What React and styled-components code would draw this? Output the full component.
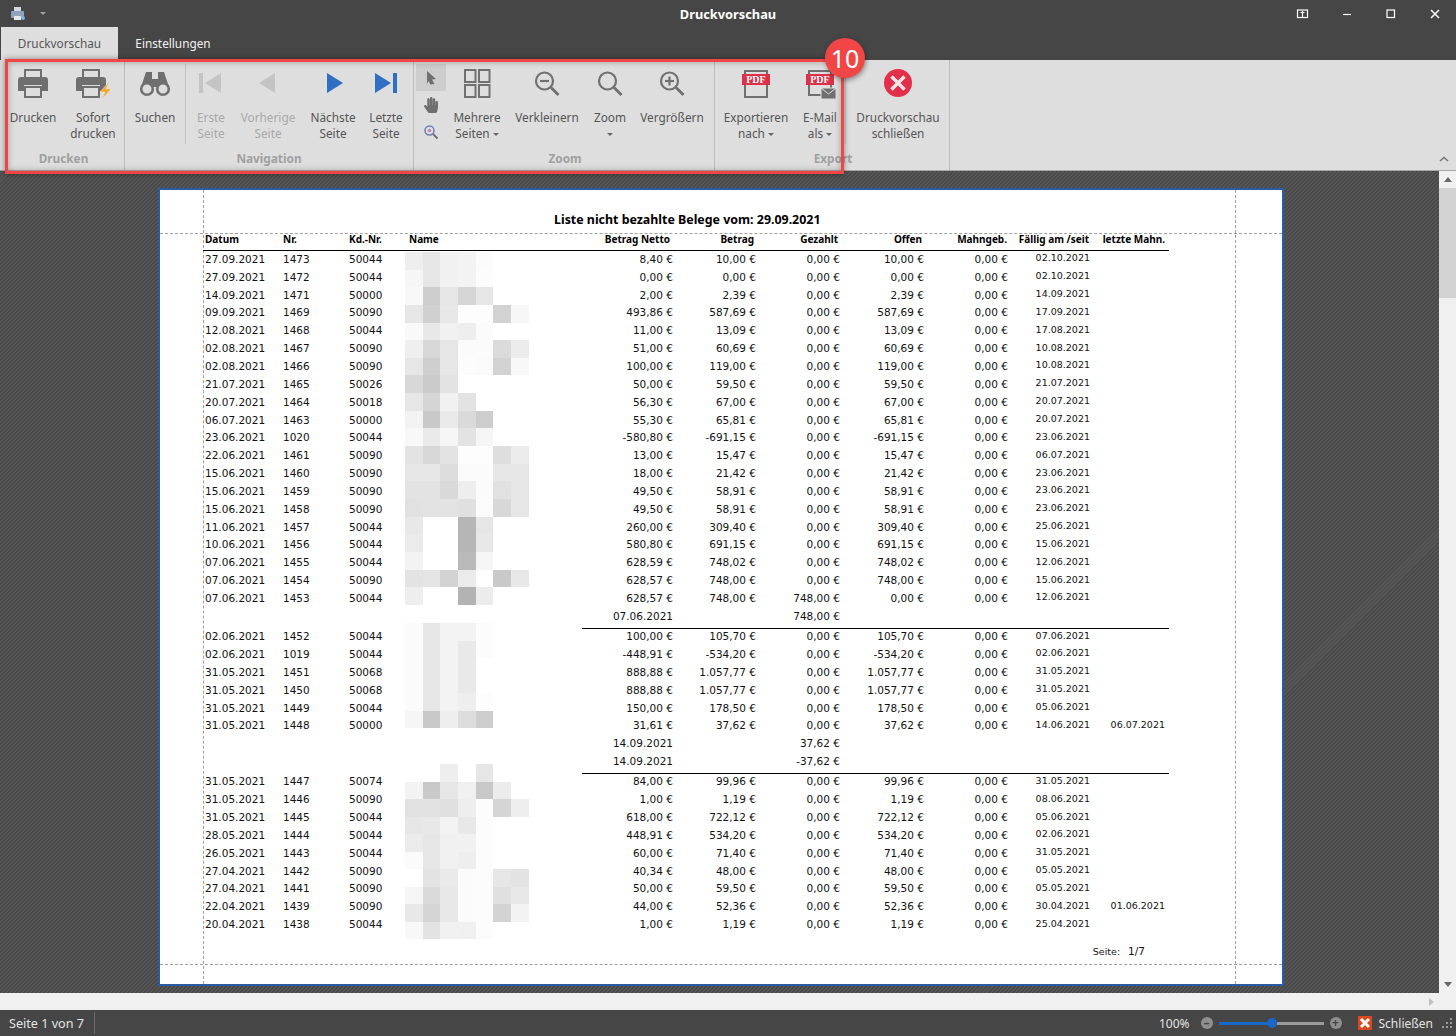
import React from "react";
import styled, { createGlobalStyle } from "styled-components";
import { FaHandPaper } from "react-icons/fa";

const GlobalStyle = createGlobalStyle`
  html, body { margin: 0; padding: 0; height: 100%; }
  body { background: #464646; font-family: "Noto Sans", "Liberation Sans", sans-serif; }
`;

// date, nr, kd, netto, betrag, due, lastReminder, paid, open
const group1 = [
  ["27.09.2021", "1473", "50044", "8,40", "10,00", "02.10.2021"],
  ["27.09.2021", "1472", "50044", "0,00", "0,00", "02.10.2021"],
  ["14.09.2021", "1471", "50000", "2,00", "2,39", "14.09.2021"],
  ["09.09.2021", "1469", "50090", "493,86", "587,69", "17.09.2021"],
  ["12.08.2021", "1468", "50044", "11,00", "13,09", "17.08.2021"],
  ["02.08.2021", "1467", "50090", "51,00", "60,69", "10.08.2021"],
  ["02.08.2021", "1466", "50090", "100,00", "119,00", "10.08.2021"],
  ["21.07.2021", "1465", "50026", "50,00", "59,50", "21.07.2021"],
  ["20.07.2021", "1464", "50018", "56,30", "67,00", "20.07.2021"],
  ["06.07.2021", "1463", "50000", "55,30", "65,81", "20.07.2021"],
  ["23.06.2021", "1020", "50044", "-580,80", "-691,15", "23.06.2021"],
  ["22.06.2021", "1461", "50090", "13,00", "15,47", "06.07.2021"],
  ["15.06.2021", "1460", "50090", "18,00", "21,42", "23.06.2021"],
  ["15.06.2021", "1459", "50090", "49,50", "58,91", "23.06.2021"],
  ["15.06.2021", "1458", "50090", "49,50", "58,91", "23.06.2021"],
  ["11.06.2021", "1457", "50044", "260,00", "309,40", "25.06.2021"],
  ["10.06.2021", "1456", "50044", "580,80", "691,15", "15.06.2021"],
  ["07.06.2021", "1455", "50044", "628,59", "748,02", "12.06.2021"],
  ["07.06.2021", "1454", "50090", "628,57", "748,00", "15.06.2021"],
  ["07.06.2021", "1453", "50044", "628,57", "748,00", "12.06.2021", "", "748,00", "0,00"],
  { date: "07.06.2021", paid: "748,00 €" },
];
const group2 = [
  ["02.06.2021", "1452", "50044", "100,00", "105,70", "07.06.2021"],
  ["02.06.2021", "1019", "50044", "-448,91", "-534,20", "02.06.2021"],
  ["31.05.2021", "1451", "50068", "888,88", "1.057,77", "31.05.2021"],
  ["31.05.2021", "1450", "50068", "888,88", "1.057,77", "31.05.2021"],
  ["31.05.2021", "1449", "50044", "150,00", "178,50", "05.06.2021"],
  ["31.05.2021", "1448", "50000", "31,61", "37,62", "14.06.2021", "06.07.2021"],
  { date: "14.09.2021", paid: "37,62 €" },
  { date: "14.09.2021", paid: "-37,62 €" },
];
const group3 = [
  ["31.05.2021", "1447", "50074", "84,00", "99,96", "31.05.2021"],
  ["31.05.2021", "1446", "50090", "1,00", "1,19", "08.06.2021"],
  ["31.05.2021", "1445", "50044", "618,00", "722,12", "05.06.2021"],
  ["28.05.2021", "1444", "50044", "448,91", "534,20", "02.06.2021"],
  ["26.05.2021", "1443", "50044", "60,00", "71,40", "31.05.2021"],
  ["27.04.2021", "1442", "50090", "40,34", "48,00", "05.05.2021"],
  ["27.04.2021", "1441", "50090", "50,00", "59,50", "05.05.2021"],
  ["22.04.2021", "1439", "50090", "44,00", "52,36", "30.04.2021", "01.06.2021"],
  ["20.04.2021", "1438", "50044", "1,00", "1,19", "25.04.2021"],
];

const mosaic1 = [
  "ee e6 f1 f3 fb ff ff", "f6 e6 f1 f3 fc ff ff", "f8 cd e6 d6 e6 ff ff", "e6 d0 e8 fd fd d2 f7",
  "f9 e8 f1 ee fb ff ff", "ef d8 e6 fb fb db ec", "e6 cf e6 fc fa d2 f8", "d8 cb e3 ff ff ff ff",
  "e6 d5 f1 e3 ff ff ff", "f3 c9 ea da cd ff ff", "f8 ea f5 e3 f5 ff ff", "e3 d8 e3 fd fd de ec",
  "e6 e6 dc fb fb e6 e6", "e3 e3 d9 ee fb e1 e6", "e1 e3 e3 e0 fc d8 e6", "e8 ff ff b6 e6 ff ff",
  "eb ff ff b6 e8 ff ff", "f3 ff ff b9 f5 ff ff", "e3 e5 d3 eb ff c9 e8", "ee ff ff b3 ec ff ff",
];
const mosaic2 = [
  "fb e6 f3 f3 fc ff ff", "fb e6 f3 e9 fc ff ff", "fb e6 f3 e9 ff ff ff",
  "fb e6 f3 e9 ff ff ff", "fb e6 f3 ee fd ff ff", "f6 c8 ee dc cd ff ff",
];
const mosaic3 = [
  "ff ff ee ff e6 ff ff", "f3 c9 e6 f0 c8 ec ff", "e2 e2 e0 ee fc d5 ee", "e6 e8 f3 e8 fc ff ff",
  "eb e6 f1 f1 fc ff ff", "fb e6 f1 ee fc ff ff", "ff e3 ea fb fc e6 e3", "f5 da e8 fb fc e0 e8",
  "e8 d5 e8 fb fc d3 f3", "f8 e3 f1 f0 fc ff ff",
];

const PrinterIcon = ({ bolt }) => (
  <svg width={bolt ? 40 : 32} height="32" viewBox={bolt ? "0 0 40 32" : "2 0 32 32"}>
    <path d="M10 10V3h16v7" fill="none" stroke="#6f6f6f" strokeWidth="2" />
    <path d="M6 10h24a3 3 0 0 1 3 3v11h-6v-6H9v6H3V13a3 3 0 0 1 3-3z" fill="#6f6f6f" />
    <path d="M10 20h16v10H10z" fill="none" stroke="#6f6f6f" strokeWidth="2" />
    {bolt && <path d="M36 15l-9 10h5l-3 7 9-10h-5l3-7z" fill="#f5a623" stroke="#dedede" strokeWidth=".6" />}
  </svg>
);

const BinocularsIcon = () => (
  <svg width="32" height="32" viewBox="0 0 32 32">
    <path d="M7 5h6v7h6V5h6l5 15H2z" fill="#6f6f6f" />
    <circle cx="8" cy="22" r="5.8" fill="#dedede" stroke="#6f6f6f" strokeWidth="2.6" />
    <circle cx="24" cy="22" r="5.8" fill="#dedede" stroke="#6f6f6f" strokeWidth="2.6" />
  </svg>
);

const navPaths = {
  first: "M4 6h4v20H4zM26 6v20L10 16z",
  prev: "M23 6v20L7 16z",
  next: "M10 6v20l16-10z",
  last: "M5 6v20l16-10zM23 6h4v20h-4z",
};

const NavIcon = ({ kind, color }) => (
  <svg width="32" height="32" viewBox="0 0 32 32">
    <path d={navPaths[kind]} fill={color} />
  </svg>
);

const PagesIcon = () => (
  <svg width="32" height="32" viewBox="0 0 32 32" fill="none" stroke="#707070" strokeWidth="2">
    <rect x="4" y="3" width="10.500" height="12" />
    <rect x="18" y="3" width="10.500" height="12" />
    <rect x="4" y="18" width="10.500" height="12" />
    <rect x="18" y="18" width="10.500" height="12" />
  </svg>
);

const MagnifierIcon = ({ sign }) => (
  <svg width="32" height="32" viewBox="0 0 32 32" fill="none" stroke="#707070" strokeWidth="2.2">
    <circle cx="13.500" cy="14" r="8.500" />
    <path d="M20 20.500l7.500 7.500" strokeWidth="2.800" />
    {sign && <path d="M9 14h9" />}
    {sign === "plus" && <path d="M13.500 9.500v9" />}
  </svg>
);

const PdfIcon = ({ mail }) => (
  <svg width="32" height="32" viewBox="0 0 32 32">
    <path d={mail ? "M5 4h22v24H5z" : "M5 4h22v26H5z"} fill="#dedede" stroke="#707070" strokeWidth="2" />
    <rect x="2" y="7" width="28" height="11" fill="#dc3047" />
    <text x="16" y="16" textAnchor="middle" fontFamily="Liberation Serif, serif" fontWeight="700" fontSize="10" fill="#fff">PDF</text>
    {mail && <path d="M17 21h15v11H17z" fill="#6f6f6f" stroke="#dedede" />}
    {mail && <path d="M17 21l7.500 6 7.500-6" fill="none" stroke="#dedede" />}
  </svg>
);

const CloseIcon = () => (
  <svg width="32" height="32" viewBox="0 0 32 32">
    <circle cx="16" cy="16" r="14" fill="#e3304a" />
    <path d="M9.500 9.500l13 13M22.500 9.500l-13 13" stroke="#f6e6e8" strokeWidth="3.400" />
  </svg>
);

const WinIcon = ({ kind }) => (
  <svg width="14" height="14" viewBox="0 0 14 14" fill="none" stroke="#fff" strokeWidth="1.200">
    {kind === "pin" && <><rect x="1.500" y="3" width="10" height="7.500" /><path d="M6.500 4v6M4.500 5.500h4" /></>}
    {kind === "min" && <path d="M3 7.500h8" />}
    {kind === "max" && <rect x="3" y="3" width="7.500" height="7.500" />}
    {kind === "close" && <path d="M3 3l8 8M11 3l-8 8" strokeWidth="1.500" />}
  </svg>
);

const ToolArrow = () => (
  <svg width="16" height="16" viewBox="0 0 16 16"><path d="M4 1l9 8-4 .5 2.500 4.500-4 .5L5.500 11 4 14z" fill="#6f6f6f" /></svg>
);

const ToolZoom = () => (
  <svg width="16" height="16" viewBox="0 0 16 16" fill="none">
    <circle cx="6.500" cy="6.500" r="4.500" stroke="#6a7fb5" strokeWidth="1.500" />
    <circle cx="6.500" cy="6.500" r="1.800" fill="#b58fb5" />
    <path d="M10 10l4.500 4.500" stroke="#6f6f6f" strokeWidth="2" />
  </svg>
);

const Report = ({ rows }) =>
  rows.map((r, i) =>
    Array.isArray(r) ? (
      <Row key={i}>
        <Cell>{r[0]}</Cell>
        <Cell>{r[1]}</Cell>
        <Cell>{r[2]}</Cell>
        <Cell $right>{r[3]} €</Cell>
        <Cell $right>{r[4]} €</Cell>
        <Cell $right>{r[7] || "0,00"} €</Cell>
        <Cell $right>{r[8] || r[4]} €</Cell>
        <Cell $right>0,00 €</Cell>
        <Cell $right $raised>{r[5]}</Cell>
        <Cell $right $raised>{r[6]}</Cell>
      </Row>
    ) : (
      <Row key={i}>
        <Cell />
        <Cell />
        <Cell />
        <Cell $right>{r.date}</Cell>
        <Cell />
        <Cell $right>{r.paid}</Cell>
      </Row>
    )
  );

const Mosaic = ({ top, rows, rowHeight }) => (
  <MosaicGrid $top={top} $rowHeight={rowHeight}>
    {rows.flatMap((line, y) =>
      line.split(" ").map((c, x) => <MosaicCell key={y + "-" + x} $shade={"#" + c + c + c} />)
    )}
  </MosaicGrid>
);

export default function App() {
  return (
    <Win>
      <GlobalStyle />
      <TitleBar>
        <QuickAccess>
          <svg width="16" height="16" viewBox="0 0 16 16">
            <path d="M4 1h7v4H4z" fill="#cfd8e6" />
            <rect x="1" y="5" width="13" height="7" rx="1" fill="#8fa3bd" />
            <rect x="4" y="10" width="7" height="4" fill="#e8e8e8" />
            <circle cx="13" cy="12" r="2" fill="#7fb2e6" />
          </svg>
          <Caret $color="#a0a0a0" />
        </QuickAccess>
        <AppTitle>Druckvorschau</AppTitle>
        <WinButtons>
          <WinButton><WinIcon kind="pin" /></WinButton>
          <WinButton><WinIcon kind="min" /></WinButton>
          <WinButton><WinIcon kind="max" /></WinButton>
          <WinButton><WinIcon kind="close" /></WinButton>
        </WinButtons>
      </TitleBar>
      <TabStrip>
        <Tab $active>Druckvorschau</Tab>
        <Tab>Einstellungen</Tab>
      </TabStrip>
      <Ribbon>
        <Group $width={125} $pad={3}>
          <Buttons>
            <RibbonButton $width={60}><IconBox><PrinterIcon /></IconBox>Drucken</RibbonButton>
            <RibbonButton $width={60}><IconBox><PrinterIcon bolt /></IconBox>Sofort<br />drucken</RibbonButton>
          </Buttons>
          <GroupLabel>Drucken</GroupLabel>
        </Group>
        <Group $width={289} $pad={0}>
          <Buttons>
            <RibbonButton $width={60}><IconBox><BinocularsIcon /></IconBox>Suchen</RibbonButton>
            <InnerSep />
            <RibbonButton $width={50} $disabled><IconBox><NavIcon kind="first" color="#c4c4c4" /></IconBox>Erste<br />Seite</RibbonButton>
            <RibbonButton $width={64} $disabled><IconBox><NavIcon kind="prev" color="#c4c4c4" /></IconBox>Vorherige<br />Seite</RibbonButton>
            <RibbonButton $width={66}><IconBox><NavIcon kind="next" color="#2f6fc4" /></IconBox>Nächste<br />Seite</RibbonButton>
            <RibbonButton $width={40}><IconBox><NavIcon kind="last" color="#2f6fc4" /></IconBox>Letzte<br />Seite</RibbonButton>
          </Buttons>
          <GroupLabel>Navigation</GroupLabel>
        </Group>
        <Group $width={301} $pad={2}>
          <Buttons>
            <ToolColumn>
              <Tool $active><ToolArrow /></Tool>
              <Tool><FaHandPaper size={16} color="#6f6f6f" /></Tool>
              <Tool><ToolZoom /></Tool>
            </ToolColumn>
            <RibbonButton $width={62}><IconBox><PagesIcon /></IconBox>Mehrere<br />Seiten <Caret /></RibbonButton>
            <RibbonButton $width={78}><IconBox><MagnifierIcon sign="minus" /></IconBox>Verkleinern</RibbonButton>
            <RibbonButton $width={48}><IconBox><MagnifierIcon /></IconBox>Zoom<br /><Caret /></RibbonButton>
            <RibbonButton $width={76}><IconBox><MagnifierIcon sign="plus" /></IconBox>Vergrößern</RibbonButton>
          </Buttons>
          <GroupLabel>Zoom</GroupLabel>
        </Group>
        <Group $width={235} $pad={2}>
          <Buttons>
            <RibbonButton $width={78}><IconBox><PdfIcon /></IconBox>Exportieren<br />nach <Caret /></RibbonButton>
            <RibbonButton $width={50}><IconBox><PdfIcon mail /></IconBox>E-Mail<br />als <Caret /></RibbonButton>
            <InnerSep />
            <RibbonButton $width={104}><IconBox><CloseIcon /></IconBox>Druckvorschau<br />schließen</RibbonButton>
          </Buttons>
          <GroupLabel>Export</GroupLabel>
        </Group>
        <RibbonFill>
          <svg width="10" height="8" viewBox="0 0 10 8" fill="none"><path d="M1 6l4-3.500L9 6" stroke="#777" strokeWidth="1.600" /></svg>
        </RibbonFill>
      </Ribbon>
      <Callout />
      <Badge>10</Badge>
      <Body>
        <Viewer>
          <Page>
            <GuideV $left={43} />
            <GuideV $left={1075} />
            <GuideH $top={43} />
            <GuideH $top={774} />
            <Mosaic top={62} rows={mosaic1} rowHeight={17.65} />
            <Mosaic top={433} rows={mosaic2} rowHeight={17.5} />
            <Mosaic top={574} rows={mosaic3} rowHeight={17.55} />
            <ReportTitle>Liste nicht bezahlte Belege vom: 29.09.2021</ReportTitle>
            <Table>
              <HeadRow>
                <HeadCell>Datum</HeadCell>
                <HeadCell>Nr.</HeadCell>
                <HeadCell>Kd.-Nr.</HeadCell>
                <HeadCell>Name</HeadCell>
                <HeadCell $right>Betrag Netto</HeadCell>
                <HeadCell $right>Betrag</HeadCell>
                <HeadCell $right>Gezahlt</HeadCell>
                <HeadCell $right>Offen</HeadCell>
                <HeadCell $right>Mahngeb.</HeadCell>
                <HeadCell $right>Fällig am /seit</HeadCell>
                <HeadCell $right>letzte Mahn.</HeadCell>
              </HeadRow>
              <Report rows={group1} />
              <Rule />
              <Report rows={group2} />
              <Rule />
              <Report rows={group3} />
              <PageFooter>
                <FooterLabel>Seite:</FooterLabel>
                <span>1/7</span>
              </PageFooter>
            </Table>
          </Page>
        </Viewer>
        <VScroll>
          <ScrollArrow><Tri /></ScrollArrow>
          <VThumb />
          <VTrack />
          <ScrollArrow><Tri $down /></ScrollArrow>
        </VScroll>
      </Body>
      <HScroll><TriRight /></HScroll>
      <StatusBar>
        <StatusPane>Seite 1 von 7</StatusPane>
        <StatusRight>
          <ZoomValue>100%</ZoomValue>
          <RoundBtn>–</RoundBtn>
          <Slider>
            <SliderFill />
            <SliderThumb />
            <SliderRest />
          </Slider>
          <RoundBtn>+</RoundBtn>
          <CloseBox>
            <svg width="14" height="14" viewBox="0 0 14 14">
              <rect width="14" height="14" fill="#d9481f" />
              <path d="M3 3l8 8M11 3l-8 8" stroke="#fff" strokeWidth="3" />
            </svg>
            Schließen
          </CloseBox>
          <Grip>
            <svg width="12" height="12" viewBox="0 0 12 12" fill="#9a9a9a">
              <rect x="9" y="1" width="2" height="2" /><rect x="5" y="5" width="2" height="2" /><rect x="9" y="5" width="2" height="2" />
              <rect x="1" y="9" width="2" height="2" /><rect x="5" y="9" width="2" height="2" /><rect x="9" y="9" width="2" height="2" />
            </svg>
          </Grip>
        </StatusRight>
      </StatusBar>
    </Win>
  );
}

const Win = styled.div`
  position: relative;
  width: 1456px;
  height: 1036px;
  overflow: hidden;
  display: flex;
  flex-direction: column;
  background: #464646;
  font-size: 11.8px;
`;
const TitleBar = styled.div`
  height: 27px;
  flex: none;
  display: grid;
  grid-template-columns: 1fr auto 1fr;
  align-items: center;
`;
const QuickAccess = styled.div`
  display: flex;
  align-items: center;
  gap: 14px;
  padding-left: 10px;
`;
const AppTitle = styled.div`
  color: #fff;
  font-weight: 700;
  font-size: 12.8px;
`;
const WinButtons = styled.div`
  display: flex;
  justify-content: flex-end;
`;
const WinButton = styled.div`
  width: 44px;
  height: 27px;
  box-sizing: border-box;
  padding-left: 2px;
  display: flex;
  align-items: center;
  justify-content: center;
`;
const TabStrip = styled.div`
  height: 33px;
  flex: none;
  display: flex;
  padding-left: 1px;
`;
const Tab = styled.div`
  width: ${(p) => (p.$active ? "117px" : "110px")};
  box-sizing: border-box;
  padding-bottom: 1px;
  display: flex;
  align-items: center;
  justify-content: center;
  color: ${(p) => (p.$active ? "#555" : "#f2f2f2")};
  background: ${(p) => (p.$active ? "#dedede" : "transparent")};
`;
const Ribbon = styled.div`
  height: 111px;
  flex: none;
  box-sizing: border-box;
  display: flex;
  background: #dedede;
  border-bottom: 1px solid #a8a8a8;
  color: #555;
`;
const Group = styled.div`
  width: ${(p) => p.$width}px;
  box-sizing: border-box;
  flex: none;
  display: flex;
  flex-direction: column;
  border-right: 1px solid #bdbdbd;
  padding-left: ${(p) => p.$pad}px;
`;
const Buttons = styled.div`
  display: flex;
  height: 88px;
`;
const RibbonButton = styled.div`
  width: ${(p) => p.$width}px;
  flex: none;
  padding-top: 7px;
  text-align: center;
  line-height: 16px;
  white-space: nowrap;
  color: ${(p) => (p.$disabled ? "#a9a9a9" : "#555")};
`;
const IconBox = styled.div`
  height: 32px;
  margin-bottom: 10px;
  display: flex;
  justify-content: center;
`;
const InnerSep = styled.div`
  width: 1px;
  height: 80px;
  margin-top: 4px;
  background: #c2c2c2;
  flex: none;
`;
const GroupLabel = styled.div`
  text-align: center;
  font-weight: 700;
  color: #a0a0a0;
  line-height: 20px;
`;
const ToolColumn = styled.div`
  width: 30px;
  flex: none;
  padding-top: 4px;
  display: flex;
  flex-direction: column;
`;
const Tool = styled.div`
  height: 27px;
  display: flex;
  align-items: center;
  justify-content: center;
  background: ${(p) => (p.$active ? "#cdcdcd" : "transparent")};
`;
const Caret = styled.span`
  display: inline-block;
  width: 0;
  height: 0;
  vertical-align: middle;
  border-left: 3px solid transparent;
  border-right: 3px solid transparent;
  border-top: 3px solid ${(p) => p.$color || "#666"};
`;
const RibbonFill = styled.div`
  flex: 1;
  display: flex;
  justify-content: flex-end;
  align-items: flex-end;
  padding: 0 7px 7px 0;
`;
const Callout = styled.div`
  position: absolute;
  left: 5px;
  top: 59px;
  width: 839px;
  height: 115px;
  box-sizing: border-box;
  border: 3px solid #f04646;
  box-shadow: 0 0 6px rgba(0, 0, 0, 0.4), inset 0 0 6px rgba(0, 0, 0, 0.3);
`;
const Badge = styled.div`
  position: absolute;
  left: 825px;
  top: 38px;
  width: 40px;
  height: 40px;
  border-radius: 50%;
  background: #f04646;
  color: #fff;
  font-size: 25px;
  display: flex;
  align-items: center;
  justify-content: center;
  box-shadow: 1px 2px 5px rgba(0, 0, 0, 0.4);
`;
const Body = styled.div`
  height: 822px;
  flex: none;
  display: flex;
`;
const Viewer = styled.div`
  flex: 1;
  display: flex;
  padding: 17px 0 0 158px;
  background: repeating-linear-gradient(135deg, #4a4a4a 0 1.41px, #555555 1.41px 2.83px);
`;
const Page = styled.div`
  position: relative;
  width: 1126px;
  height: 798px;
  flex: none;
  box-sizing: border-box;
  border: 2px solid #2a5ca6;
  background: #fff;
  overflow: hidden;
  font-family: "DejaVu Sans", sans-serif;
  color: #111;
`;
const GuideV = styled.div`
  position: absolute;
  top: 0;
  bottom: 0;
  left: ${(p) => p.$left}px;
  border-left: 1px dashed #a0a0a0;
`;
const GuideH = styled.div`
  position: absolute;
  left: 0;
  right: 0;
  top: ${(p) => p.$top}px;
  border-top: 1px dashed #a0a0a0;
`;
const MosaicGrid = styled.div`
  position: absolute;
  left: 245px;
  top: ${(p) => p.$top}px;
  display: grid;
  grid-template-columns: repeat(7, 17.7px);
  grid-auto-rows: ${(p) => p.$rowHeight}px;
`;
const MosaicCell = styled.div`
  background: ${(p) => p.$shade};
`;
const ReportTitle = styled.div`
  height: 43px;
  box-sizing: border-box;
  padding-top: 21px;
  padding-left: 394px;
  font-family: "Noto Sans", sans-serif;
  font-size: 12.4px;
  line-height: 18px;
  font-weight: 700;
  color: #000;
  white-space: nowrap;
`;
const Table = styled.div`
  position: relative;
  margin-left: 43px;
  width: 966px;
  font-size: 10.5px;
`;
const columns = "78px 66px 60px 264px 83px 84px 84px 84px 82px 75px";
const HeadRow = styled.div`
  display: grid;
  grid-template-columns: 78px 66px 60px 60px 201px 84px 84px 84px 85px 82px 76px;
  height: 17px;
  box-sizing: content-box;
  padding-left: 2px;
  border-bottom: 1px solid #000;
  align-items: start;
  font-family: "Noto Sans", sans-serif;
  font-weight: 700;
  font-size: 10px;
  line-height: 12px;
  color: #000;
`;
const HeadCell = styled.div`
  text-align: ${(p) => (p.$right ? "right" : "left")};
  white-space: nowrap;
`;
const Row = styled.div`
  display: grid;
  grid-template-columns: ${columns};
  height: 17.85px;
  padding-left: 2px;
  align-items: center;
  white-space: nowrap;
`;
const Cell = styled.div`
  text-align: ${(p) => (p.$right ? "right" : "left")};
  padding-bottom: ${(p) => (p.$raised ? "4px" : "2px")};
  font-size: ${(p) => (p.$raised ? "9.5px" : "inherit")};
`;
const Rule = styled.div`
  margin: 2.5px 0 -1px 379px;
  border-top: 1px solid #000;
  height: 0;
`;
const PageFooter = styled.div`
  display: flex;
  justify-content: flex-end;
  align-items: center;
  gap: 8px;
  margin-top: 11px;
  padding-right: 24px;
  font-size: 10.5px;
`;
const FooterLabel = styled.span`
  font-size: 9.5px;
`;
const VScroll = styled.div`
  width: 17px;
  flex: none;
  display: flex;
  flex-direction: column;
  background: #f0f0f0;
`;
const ScrollArrow = styled.div`
  height: 17px;
  flex: none;
  display: flex;
  align-items: center;
  justify-content: center;
`;
const Tri = styled.span`
  width: 0;
  height: 0;
  border-left: 4px solid transparent;
  border-right: 4px solid transparent;
  ${(p) => (p.$down ? "border-top: 5px solid #666;" : "border-bottom: 5px solid #666;")}
`;
const VThumb = styled.div`
  height: 110px;
  flex: none;
  background: #d2d2d2;
`;
const VTrack = styled.div`
  flex: 1;
`;
const HScroll = styled.div`
  height: 17px;
  flex: none;
  box-sizing: border-box;
  display: flex;
  align-items: center;
  justify-content: flex-end;
  padding-right: 22px;
  background: #f0f0f0;
`;
const TriRight = styled.span`
  width: 0;
  height: 0;
  border-top: 4px solid transparent;
  border-bottom: 4px solid transparent;
  border-left: 5px solid #c0c0c0;
`;
const StatusBar = styled.div`
  flex: 1;
  display: flex;
  align-items: center;
  justify-content: space-between;
  color: #e4e4e4;
  font-size: 12px;
`;
const StatusPane = styled.div`
  width: 85px;
  padding-left: 9px;
  height: 22px;
  line-height: 24px;
  font-size: 12.6px;
  border-right: 1px solid #6a6a6a;
  white-space: nowrap;
`;
const StatusRight = styled.div`
  display: flex;
  align-items: center;
  padding-right: 3px;
`;
const ZoomValue = styled.div`
  margin-right: 11px;
`;
const RoundBtn = styled.div`
  width: 12px;
  height: 12px;
  border-radius: 50%;
  background: #8f8f8f;
  color: #464646;
  font-size: 12px;
  font-weight: 700;
  line-height: 11px;
  text-align: center;
`;
const Slider = styled.div`
  display: flex;
  align-items: center;
  width: 105px;
  margin: 0 6px;
`;
const SliderFill = styled.div`
  width: 48px;
  height: 3px;
  background: #1a68c8;
`;
const SliderThumb = styled.div`
  width: 10px;
  height: 10px;
  border-radius: 50%;
  background: #1a68c8;
  flex: none;
`;
const SliderRest = styled.div`
  flex: 1;
  height: 3px;
  background: #9a9a9a;
`;
const CloseBox = styled.div`
  display: flex;
  align-items: center;
  gap: 7px;
  margin-left: 16px;
`;
const Grip = styled.div`
  display: flex;
  margin-left: 8px;
`;
